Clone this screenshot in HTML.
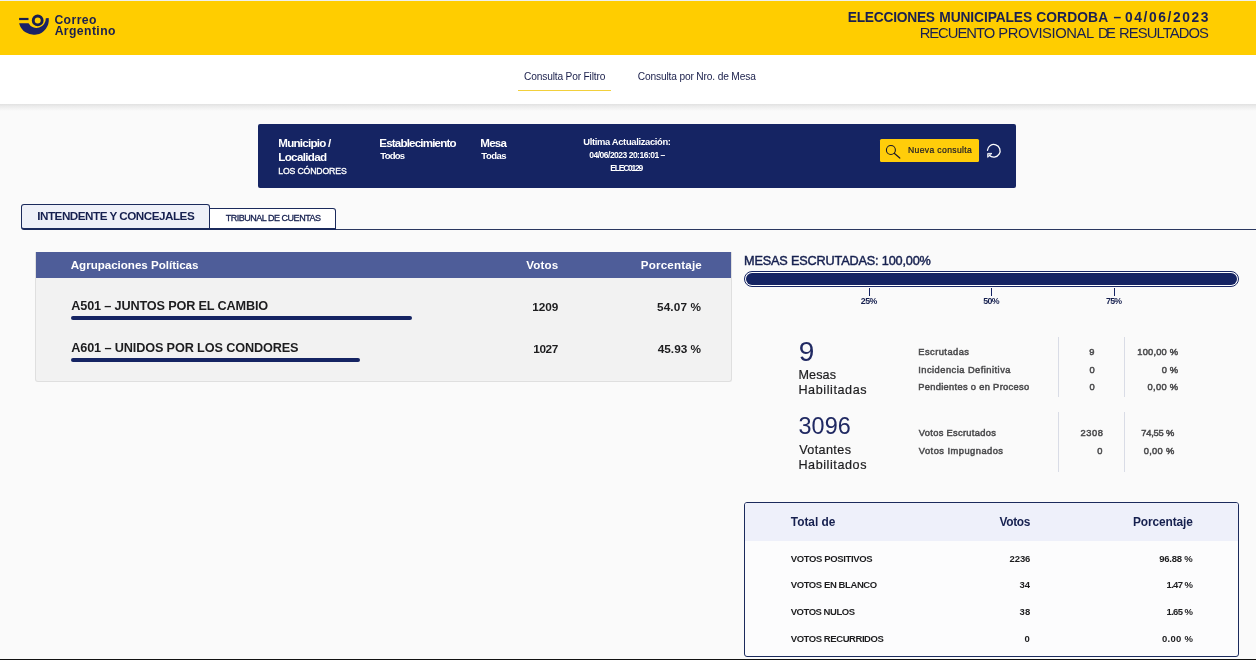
<!DOCTYPE html>
<html lang="es">
<head>
<meta charset="utf-8">
<title>Elecciones Municipales Cordoba - Recuento Provisional de Resultados</title>
<style>
*{box-sizing:border-box;margin:0;padding:0}
html,body{width:1256px;height:660px;overflow:hidden;background:#fafafa;font-family:"Liberation Sans",sans-serif}
#page{will-change:transform;position:relative;width:1256px;height:660px;overflow:hidden;background:#fafafa}
.a{position:absolute}
.t{position:absolute;line-height:1;white-space:pre}
#topline{left:0;top:0;width:1256px;height:1px;background:#eef0ee}
#hdr{left:0;top:1px;width:1256px;height:54px;background:#ffcd00}
#nav{left:0;top:55px;width:1256px;height:49px;background:#fff}
#navs{left:0;top:104px;width:1256px;height:7px;background:linear-gradient(#e1e1e1,#ececec 35%,#fafafa)}
#navu{left:518px;top:89.6px;width:92.8px;height:1.6px;background:#f2d03b}
#filt{left:258px;top:124px;width:758px;height:63.6px;background:#152463;border-radius:2px}
#btn{left:880px;top:138.5px;width:99px;height:23.3px;background:#ffcd0a;border-radius:1.5px}
#tab1{left:21px;top:204px;width:189px;height:26px;background:#eef0f8;border:1px solid #1b2a5c;border-bottom-width:2px;border-radius:3px 3px 0 3px}
#tab2{left:209px;top:208px;width:127px;height:22px;background:#fff;border:1px solid #1b2a5c;border-bottom-width:2px;border-radius:0 3px 0 0}
#tabline{left:335px;top:229px;width:921px;height:1px;background:#2a375f}
#tbl{left:35px;top:252px;width:697px;height:130px;background:#f2f2f2;border:1px solid #dfdfdf;border-top:0;border-radius:0 0 3px 3px}
#tblh{left:36px;top:252px;width:695px;height:25.8px;background:#4e5d99}
.bar{height:4px;border-radius:2px;background:#152463}
#pbar{left:744px;top:271px;width:495px;height:16px;border:1px solid #152463;border-radius:8px;background:#fff}
#pbar i{position:absolute;left:1px;top:1px;right:1px;bottom:1px;border-radius:7px;background:#152463}
.tick{width:1px;height:7.5px;top:288px;background:#152463}
.vd{width:1px;background:#d9dce6}
#box{left:744.3px;top:502.3px;width:494.7px;height:154.3px;border:1px solid #1b2a5c;border-bottom-width:1.5px;border-radius:3px;background:#fcfcfd;overflow:hidden}
#boxh{position:absolute;left:0;top:0;right:0;height:37.5px;background:#eef0fa}
#botline{left:0;top:658.7px;width:1256px;height:1.3px;background:#111}
</style>
</head>
<body>
<div id="page">
<div class="a" id="hdr"></div>
<div class="a" id="topline"></div>
<div class="a" id="nav"></div>
<div class="a" id="navs"></div>
<div class="a" id="navu"></div>
<svg class="a" style="left:15px;top:10px" width="40" height="30" viewBox="15 10 40 30">
<rect x="19.1" y="17.9" width="9.4" height="2.2" fill="#181f50"/>
<circle cx="37.7" cy="20.4" r="4.45" fill="none" stroke="#181f50" stroke-width="2.9"/>
<path d="M19.1 23.3 H28.5 A9.26 9.26 0 0 0 45.8 18.3 L48.7 17.9 A15.07 15.07 0 0 1 19.1 23.3 Z" fill="#1a2266"/>
</svg>
<div class="a" id="filt"></div>
<div class="a" id="btn"></div>
<svg class="a" style="left:884px;top:143px" width="18" height="17" viewBox="884 143 18 17">
<circle cx="890.9" cy="150" r="4.5" fill="none" stroke="#1a1a2a" stroke-width="1.1"/>
<path d="M894.2 153.3 L899.8 158" stroke="#1a1a2a" stroke-width="1.2" stroke-linecap="round" fill="none"/>
</svg>
<svg class="a" style="left:984px;top:141px" width="20" height="20" viewBox="984 141 20 20">
<path d="M987.52 150.25 A6.3 6.3 0 1 1 989.27 155.18" fill="none" stroke="#fff" stroke-width="1.3" stroke-linecap="round"/>
<path d="M991.6 153.4 L987.7 153.4 L987.7 157 Z" fill="#fff" fill-opacity=".5" stroke="#fff" stroke-width=".9" stroke-linecap="round" stroke-linejoin="round"/>
</svg>
<div class="a" id="tabline"></div>
<div class="a" id="tab2"></div>
<div class="a" id="tab1"></div>
<div class="a" id="tbl"></div>
<div class="a" id="tblh"></div>
<div class="a bar" style="left:71px;top:316px;width:341px"></div>
<div class="a bar" style="left:71px;top:358px;width:289px"></div>
<div class="a" id="pbar"><i></i></div>
<div class="a tick" style="left:868.6px;width:1.2px"></div>
<div class="a tick" style="left:991.2px;width:1.2px"></div>
<div class="a tick" style="left:1113.5px;width:1.2px"></div>
<div class="a vd" style="left:1058px;top:337px;height:59.5px"></div>
<div class="a vd" style="left:1124px;top:337px;height:59.5px"></div>
<div class="a vd" style="left:1058px;top:412px;height:59.5px"></div>
<div class="a vd" style="left:1124px;top:412px;height:59.5px"></div>
<div class="a" id="box"><div id="boxh"></div></div>
<div class="a" id="botline"></div>
<span class="t" style="left:54.4px;top:13.7px;font-size:12.2px;font-weight:700;letter-spacing:0.43px;color:#1a2050">Correo</span>
<span class="t" style="left:54.65px;top:24.7px;font-size:12.2px;font-weight:700;letter-spacing:0.406px;color:#1a2050">Argentino</span>
<span class="t" style="left:847.7px;top:11.0px;font-size:13.8px;font-weight:700;letter-spacing:-0.256px;color:#1a2050">ELECCIONES</span>
<span class="t" style="left:939.3px;top:11.0px;font-size:13.8px;font-weight:700;letter-spacing:-0.12px;color:#1a2050">MUNICIPALES</span>
<span class="t" style="left:1036.2px;top:11.0px;font-size:13.8px;font-weight:700;letter-spacing:0.108px;color:#1a2050">CORDOBA</span>
<span class="t" style="left:1113.53px;top:11.0px;font-size:13.8px;font-weight:700;letter-spacing:0.0px;color:#1a2050">–</span>
<span class="t" style="left:1124.9px;top:11.0px;font-size:13.8px;font-weight:700;letter-spacing:1.617px;color:#1a2050">04/06/2023</span>
<span class="t" style="left:919.65px;top:25.5px;font-size:14.8px;font-weight:400;letter-spacing:-1.036px;color:#1a2050">RECUENTO</span>
<span class="t" style="left:998.25px;top:25.5px;font-size:14.8px;font-weight:400;letter-spacing:-0.435px;color:#1a2050">PROVISIONAL</span>
<span class="t" style="left:1097.95px;top:25.5px;font-size:14.8px;font-weight:400;letter-spacing:-2.65px;color:#1a2050">DE</span>
<span class="t" style="left:1119.05px;top:25.5px;font-size:14.8px;font-weight:400;letter-spacing:-0.922px;color:#1a2050">RESULTADOS</span>
<span class="t" style="left:524.1px;top:72.4px;font-size:10.2px;font-weight:400;letter-spacing:-0.175px;color:#1a1f4b">Consulta Por Filtro</span>
<span class="t" style="left:637.8px;top:72.4px;font-size:10.2px;font-weight:400;letter-spacing:-0.156px;color:#1a1f4b">Consulta por Nro. de Mesa</span>
<span class="t" style="left:278.25px;top:136.9px;font-size:11.6px;font-weight:700;letter-spacing:-0.76px;color:#ffffff">Municipio /</span>
<span class="t" style="left:278.25px;top:151.2px;font-size:11.6px;font-weight:700;letter-spacing:-0.662px;color:#ffffff">Localidad</span>
<span class="t" style="left:278.25px;top:166.6px;font-size:8.7px;font-weight:400;letter-spacing:-0.141px;color:#ffffff;-webkit-text-stroke:.3px #fff">LOS CÓNDORES</span>
<span class="t" style="left:379.25px;top:136.9px;font-size:11.6px;font-weight:700;letter-spacing:-0.825px;color:#ffffff">Establecimiento</span>
<span class="t" style="left:380.3px;top:151.0px;font-size:9.5px;font-weight:700;letter-spacing:-0.75px;color:#ffffff">Todos</span>
<span class="t" style="left:480.25px;top:136.9px;font-size:11.6px;font-weight:700;letter-spacing:-0.75px;color:#ffffff">Mesa</span>
<span class="t" style="left:481.3px;top:151.0px;font-size:9.5px;font-weight:700;letter-spacing:-0.5px;color:#ffffff">Todas</span>
<span class="t" style="left:583.25px;top:137.0px;font-size:9.4px;font-weight:700;letter-spacing:-0.338px;color:#ffffff">Ultima Actualización:</span>
<span class="t" style="left:589.25px;top:150.8px;font-size:8.5px;font-weight:700;letter-spacing:-0.5px;color:#ffffff">04/06/2023 20:16:01 –</span>
<span class="t" style="left:610.25px;top:163.8px;font-size:8.5px;font-weight:700;letter-spacing:-1.214px;color:#ffffff">ELEC0129</span>
<span class="t" style="left:907.95px;top:145.5px;font-size:8.6px;font-weight:400;letter-spacing:0.362px;color:#1a1a2a;-webkit-text-stroke:.2px #1a1a2a">Nueva consulta</span>
<span class="t" style="left:37.25px;top:210.1px;font-size:11.7px;font-weight:700;letter-spacing:-0.498px;color:#16204f">INTENDENTE Y CONCEJALES</span>
<span class="t" style="left:225.75px;top:214.4px;font-size:9px;font-weight:400;letter-spacing:-0.486px;color:#16204f;-webkit-text-stroke:.3px #16204f">TRIBUNAL DE CUENTAS</span>
<span class="t" style="left:70.75px;top:259.2px;font-size:11.6px;font-weight:700;letter-spacing:-0.024px;color:#ffffff">Agrupaciones Políticas</span>
<span class="t" style="left:526.35px;top:259.2px;font-size:11.6px;font-weight:700;letter-spacing:0.137px;color:#ffffff">Votos</span>
<span class="t" style="left:640.85px;top:259.2px;font-size:11.6px;font-weight:700;letter-spacing:0.178px;color:#ffffff">Porcentaje</span>
<span class="t" style="left:71.25px;top:300.0px;font-size:12.7px;font-weight:700;letter-spacing:-0.163px;color:#1d1d1f">A501 – JUNTOS POR EL CAMBIO</span>
<span class="t" style="left:532.25px;top:301.9px;font-size:11.8px;font-weight:700;letter-spacing:-0.1px;color:#1d1d1f">1209</span>
<span class="t" style="left:657.0px;top:301.9px;font-size:11.8px;font-weight:700;letter-spacing:0.117px;color:#1d1d1f">54.07 %</span>
<span class="t" style="left:71.25px;top:341.7px;font-size:12.7px;font-weight:700;letter-spacing:-0.138px;color:#1d1d1f">A601 – UNIDOS POR LOS CONDORES</span>
<span class="t" style="left:533.25px;top:343.6px;font-size:11.8px;font-weight:700;letter-spacing:-0.433px;color:#1d1d1f">1027</span>
<span class="t" style="left:657.75px;top:343.6px;font-size:11.8px;font-weight:700;letter-spacing:-0.008px;color:#1d1d1f">45.93 %</span>
<span class="t" style="left:744.0px;top:254.5px;font-size:12.7px;font-weight:400;letter-spacing:-0.167px;color:#16204f;-webkit-text-stroke:.45px #16204f">MESAS ESCRUTADAS: 100,00%</span>
<span class="t" style="left:860.75px;top:297.3px;font-size:8.8px;font-weight:700;letter-spacing:-0.5px;color:#16204f">25%</span>
<span class="t" style="left:983.25px;top:297.3px;font-size:8.8px;font-weight:700;letter-spacing:-0.625px;color:#16204f">50%</span>
<span class="t" style="left:1106.0px;top:297.3px;font-size:8.8px;font-weight:700;letter-spacing:-0.75px;color:#16204f">75%</span>
<span class="t" style="left:798.83px;top:338.3px;font-size:28px;font-weight:400;letter-spacing:0.0px;color:#202962">9</span>
<span class="t" style="left:798.4px;top:369.3px;font-size:12.6px;font-weight:400;letter-spacing:0.138px;color:#1d1d1f;-webkit-text-stroke:.2px #1d1d1f">Mesas</span>
<span class="t" style="left:798.4px;top:384.1px;font-size:12.6px;font-weight:400;letter-spacing:0.59px;color:#1d1d1f;-webkit-text-stroke:.2px #1d1d1f">Habilitadas</span>
<span class="t" style="left:918.25px;top:347.9px;font-size:9.3px;font-weight:400;letter-spacing:0.472px;color:#4b4b4d;-webkit-text-stroke:.5px #4b4b4d">Escrutadas</span>
<span class="t" style="left:918.25px;top:366.1px;font-size:9.3px;font-weight:400;letter-spacing:0.475px;color:#4b4b4d;-webkit-text-stroke:.5px #4b4b4d">Incidencia Definitiva</span>
<span class="t" style="left:918.25px;top:382.9px;font-size:9.3px;font-weight:400;letter-spacing:0.318px;color:#4b4b4d;-webkit-text-stroke:.5px #4b4b4d">Pendientes o en Proceso</span>
<span class="t" style="left:1089.28px;top:347.9px;font-size:9.3px;font-weight:400;letter-spacing:0.0px;color:#4b4b4d;-webkit-text-stroke:.5px #4b4b4d">9</span>
<span class="t" style="left:1089.5px;top:366.1px;font-size:9.3px;font-weight:400;letter-spacing:0.0px;color:#4b4b4d;-webkit-text-stroke:.5px #4b4b4d">0</span>
<span class="t" style="left:1089.5px;top:382.9px;font-size:9.3px;font-weight:400;letter-spacing:0.0px;color:#4b4b4d;-webkit-text-stroke:.5px #4b4b4d">0</span>
<span class="t" style="left:1137.25px;top:347.9px;font-size:9.3px;font-weight:400;letter-spacing:0.221px;color:#4b4b4d;-webkit-text-stroke:.5px #4b4b4d">100,00 %</span>
<span class="t" style="left:1161.75px;top:366.1px;font-size:9.3px;font-weight:400;letter-spacing:0.15px;color:#4b4b4d;-webkit-text-stroke:.5px #4b4b4d">0 %</span>
<span class="t" style="left:1147.55px;top:382.9px;font-size:9.3px;font-weight:400;letter-spacing:0.32px;color:#4b4b4d;-webkit-text-stroke:.5px #4b4b4d">0,00 %</span>
<span class="t" style="left:798.4px;top:415.2px;font-size:23.4px;font-weight:400;letter-spacing:0.133px;color:#202962">3096</span>
<span class="t" style="left:799.15px;top:444.3px;font-size:12.6px;font-weight:400;letter-spacing:0.4px;color:#1d1d1f;-webkit-text-stroke:.2px #1d1d1f">Votantes</span>
<span class="t" style="left:798.4px;top:459.3px;font-size:12.6px;font-weight:400;letter-spacing:0.575px;color:#1d1d1f;-webkit-text-stroke:.2px #1d1d1f">Habilitados</span>
<span class="t" style="left:918.75px;top:428.9px;font-size:9.3px;font-weight:400;letter-spacing:0.317px;color:#4b4b4d;-webkit-text-stroke:.5px #4b4b4d">Votos Escrutados</span>
<span class="t" style="left:918.75px;top:446.9px;font-size:9.3px;font-weight:400;letter-spacing:0.483px;color:#4b4b4d;-webkit-text-stroke:.5px #4b4b4d">Votos Impugnados</span>
<span class="t" style="left:1080.4px;top:428.9px;font-size:9.3px;font-weight:400;letter-spacing:0.633px;color:#4b4b4d;-webkit-text-stroke:.5px #4b4b4d">2308</span>
<span class="t" style="left:1097.15px;top:446.9px;font-size:9.3px;font-weight:400;letter-spacing:0.0px;color:#4b4b4d;-webkit-text-stroke:.5px #4b4b4d">0</span>
<span class="t" style="left:1141.2px;top:428.9px;font-size:9.3px;font-weight:400;letter-spacing:-0.175px;color:#4b4b4d;-webkit-text-stroke:.5px #4b4b4d">74,55 %</span>
<span class="t" style="left:1143.75px;top:446.9px;font-size:9.3px;font-weight:400;letter-spacing:0.3px;color:#4b4b4d;-webkit-text-stroke:.5px #4b4b4d">0,00 %</span>
<span class="t" style="left:790.75px;top:516.7px;font-size:11.9px;font-weight:700;letter-spacing:0.0px;color:#16204f">Total de</span>
<span class="t" style="left:999.5px;top:516.7px;font-size:11.9px;font-weight:700;letter-spacing:-0.312px;color:#16204f">Votos</span>
<span class="t" style="left:1133.0px;top:516.7px;font-size:11.9px;font-weight:700;letter-spacing:-0.111px;color:#16204f">Porcentaje</span>
<span class="t" style="left:790.75px;top:554.0px;font-size:9.5px;font-weight:700;letter-spacing:-0.357px;color:#1d1d1f">VOTOS POSITIVOS</span>
<span class="t" style="left:1009.5px;top:554.0px;font-size:9.5px;font-weight:700;letter-spacing:-0.083px;color:#1d1d1f">2236</span>
<span class="t" style="left:1159.25px;top:554.0px;font-size:9.5px;font-weight:700;letter-spacing:-0.25px;color:#1d1d1f">96.88 %</span>
<span class="t" style="left:790.75px;top:580.0px;font-size:9.5px;font-weight:700;letter-spacing:-0.411px;color:#1d1d1f">VOTOS EN BLANCO</span>
<span class="t" style="left:1019.5px;top:580.0px;font-size:9.5px;font-weight:700;letter-spacing:0.0px;color:#1d1d1f">34</span>
<span class="t" style="left:1166.5px;top:580.0px;font-size:9.5px;font-weight:700;letter-spacing:-0.65px;color:#1d1d1f">1.47 %</span>
<span class="t" style="left:790.75px;top:607.0px;font-size:9.5px;font-weight:700;letter-spacing:-0.475px;color:#1d1d1f">VOTOS NULOS</span>
<span class="t" style="left:1019.5px;top:607.0px;font-size:9.5px;font-weight:700;letter-spacing:0.25px;color:#1d1d1f">38</span>
<span class="t" style="left:1166.5px;top:607.0px;font-size:9.5px;font-weight:700;letter-spacing:-0.65px;color:#1d1d1f">1.65 %</span>
<span class="t" style="left:790.75px;top:634.0px;font-size:9.5px;font-weight:700;letter-spacing:-0.433px;color:#1d1d1f">VOTOS RECURRIDOS</span>
<span class="t" style="left:1024.38px;top:634.0px;font-size:9.5px;font-weight:700;letter-spacing:0.0px;color:#1d1d1f">0</span>
<span class="t" style="left:1162.0px;top:634.0px;font-size:9.5px;font-weight:700;letter-spacing:0.25px;color:#1d1d1f">0.00 %</span>
</div>
</body>
</html>
